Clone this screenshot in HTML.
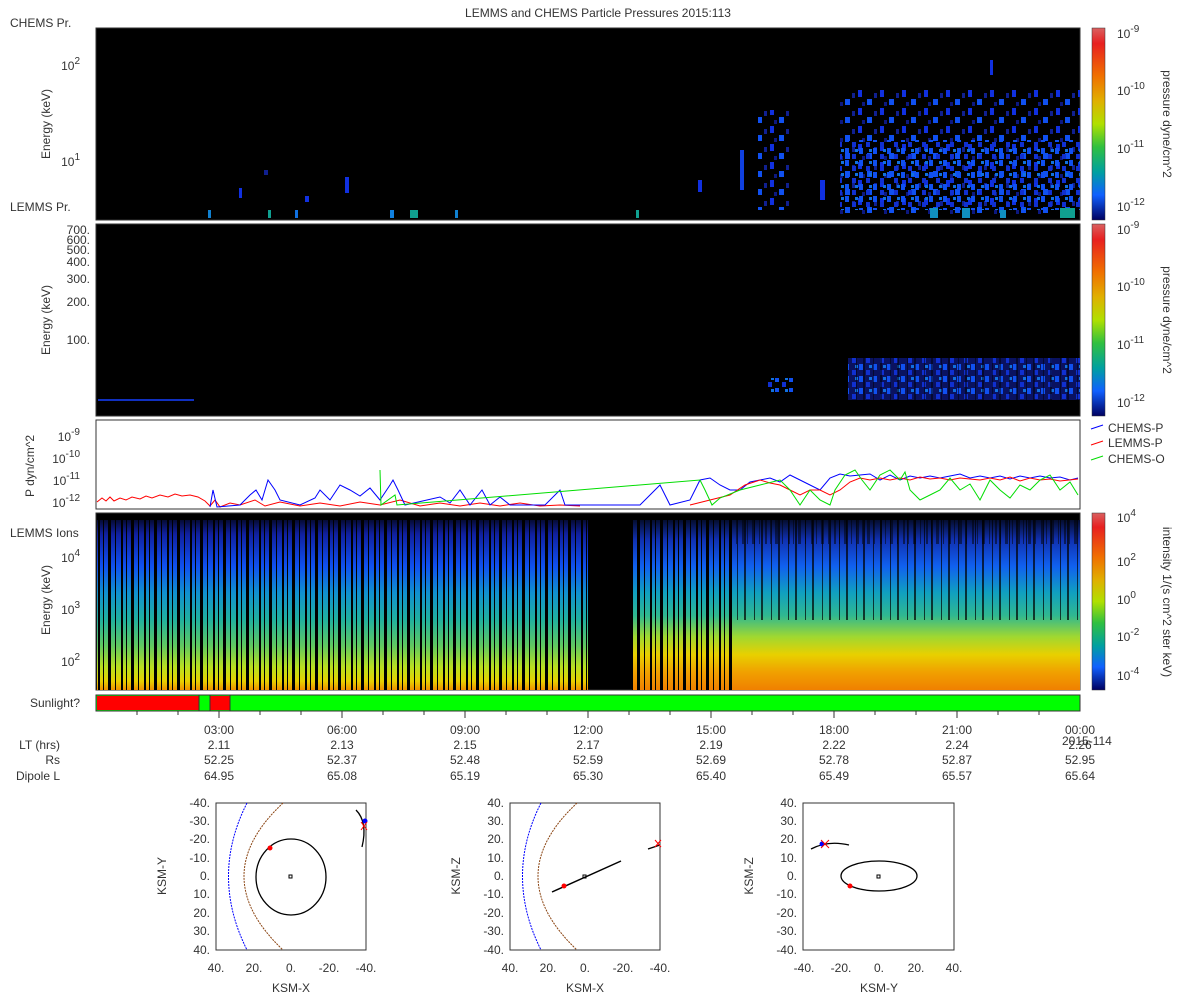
<!DOCTYPE html>
<html><head><meta charset="utf-8"><style>
html,body{margin:0;padding:0;background:#fff;}
svg{display:block;font-family:"Liberation Sans",sans-serif;}
text{fill:#333;font-size:12px;}
</style></head><body>
<svg width="1200" height="1000" viewBox="0 0 1200 1000" xmlns="http://www.w3.org/2000/svg">
<defs>
<linearGradient id="cb" x1="0" y1="0" x2="0" y2="1">
<stop offset="0" stop-color="#d96060"/><stop offset="0.08" stop-color="#e82020"/><stop offset="0.25" stop-color="#f07000"/><stop offset="0.38" stop-color="#e0b000"/><stop offset="0.5" stop-color="#b0e000"/><stop offset="0.62" stop-color="#30c040"/><stop offset="0.75" stop-color="#00a0a0"/><stop offset="0.87" stop-color="#1060ff"/><stop offset="1" stop-color="#000060"/>
</linearGradient>
<linearGradient id="ions" x1="0" y1="513" x2="0" y2="690" gradientUnits="userSpaceOnUse">
<stop offset="0" stop-color="#000"/><stop offset="0.12" stop-color="#1020a0"/><stop offset="0.3" stop-color="#1050f0"/><stop offset="0.45" stop-color="#1090d0"/><stop offset="0.6" stop-color="#20b0a0"/><stop offset="0.75" stop-color="#60c860"/><stop offset="0.87" stop-color="#b8e020"/><stop offset="0.95" stop-color="#e8d000"/><stop offset="1" stop-color="#f09000"/>
</linearGradient>
<linearGradient id="ionsR" x1="0" y1="513" x2="0" y2="690" gradientUnits="userSpaceOnUse">
<stop offset="0" stop-color="#000"/><stop offset="0.15" stop-color="#1030b0"/><stop offset="0.3" stop-color="#1060f0"/><stop offset="0.45" stop-color="#10a0c0"/><stop offset="0.58" stop-color="#30b890"/><stop offset="0.7" stop-color="#a0d830"/><stop offset="0.8" stop-color="#e8d000"/><stop offset="0.9" stop-color="#f0a000"/><stop offset="1" stop-color="#f08000"/>
</linearGradient>
<pattern id="stripes" x="96" y="0" width="23" height="1000" patternUnits="userSpaceOnUse">
<rect x="2" y="0" width="2" height="1000" fill="#000"/><rect x="7" y="0" width="1" height="1000" fill="#000"/><rect x="12" y="0" width="3" height="1000" fill="#000"/><rect x="19" y="0" width="1" height="1000" fill="#000"/>
</pattern>
<pattern id="stripes2" x="3" y="0" width="17" height="1000" patternUnits="userSpaceOnUse">
<rect x="3" y="0" width="1" height="1000" fill="#000"/><rect x="10" y="0" width="2" height="1000" fill="#000"/>
</pattern>
<pattern id="dots" x="0" y="0" width="22" height="18" patternUnits="userSpaceOnUse">
<rect x="0" y="0" width="4" height="7" fill="#1030e0"/><rect x="9" y="9" width="5" height="6" fill="#1050f0"/><rect x="16" y="3" width="3" height="5" fill="#102090"/><rect x="4" y="12" width="3" height="4" fill="#0c1880"/>
</pattern>
<pattern id="dots2" x="5" y="4" width="14" height="12" patternUnits="userSpaceOnUse">
<rect x="0" y="0" width="4" height="6" fill="#1050f0"/><rect x="7" y="6" width="4" height="5" fill="#1030d0"/><rect x="10" y="1" width="3" height="3" fill="#1070e0"/>
</pattern>
</defs>

<text x="598" y="17" text-anchor="middle">LEMMS and CHEMS Particle Pressures  2015:113</text>

<!-- Panel 1 -->
<rect x="96" y="28" width="984" height="192" fill="#000" stroke="#333"/>
<text x="10" y="27">CHEMS Pr.</text>
<text x="10" y="211">LEMMS Pr.</text>
<text x="80" y="70" text-anchor="end">10<tspan dy="-6" font-size="10">2</tspan></text>
<text x="80" y="166" text-anchor="end">10<tspan dy="-6" font-size="10">1</tspan></text>
<text transform="translate(50,124) rotate(-90)" text-anchor="middle">Energy (keV)</text>
<g fill="#1030e0">
<rect x="208" y="210" width="3" height="8" fill="#1080d0"/><rect x="268" y="210" width="3" height="8" fill="#10a090"/><rect x="295" y="210" width="3" height="8" fill="#1070e0"/>
<rect x="239" y="188" width="3" height="10"/><rect x="264" y="170" width="4" height="5" fill="#102090"/><rect x="305" y="196" width="4" height="6"/><rect x="345" y="177" width="4" height="16"/><rect x="390" y="210" width="4" height="8" fill="#1080e0"/><rect x="410" y="210" width="8" height="8" fill="#10a090"/><rect x="455" y="210" width="3" height="8" fill="#1080d0"/><rect x="636" y="210" width="3" height="8" fill="#10a090"/>
<rect x="740" y="150" width="4" height="40" fill="#1040e0"/><rect x="820" y="180" width="5" height="20"/><rect x="698" y="180" width="4" height="12"/><rect x="990" y="60" width="3" height="15"/>
</g>
<rect x="758" y="110" width="34" height="100" fill="url(#dots)"/>
<rect x="840" y="90" width="240" height="125" fill="url(#dots)"/>
<rect x="840" y="140" width="240" height="70" fill="url(#dots2)"/>
<g fill="#1090c0"><rect x="930" y="208" width="8" height="10"/><rect x="962" y="208" width="8" height="10"/><rect x="1060" y="208" width="15" height="10" fill="#10a090"/><rect x="1000" y="210" width="6" height="8"/></g>

<!-- Panel 2 -->
<rect x="96" y="224" width="984" height="192" fill="#000" stroke="#333"/>
<g text-anchor="end" font-size="11">
<text x="90" y="234">700.</text><text x="90" y="244">600.</text><text x="90" y="254">500.</text><text x="90" y="266">400.</text><text x="90" y="283">300.</text><text x="90" y="306">200.</text><text x="90" y="344">100.</text>
</g>
<text transform="translate(50,320) rotate(-90)" text-anchor="middle">Energy (keV)</text>
<rect x="98" y="399" width="96" height="2" fill="#1030c0"/>
<rect x="765" y="378" width="30" height="14" fill="url(#dots2)"/>
<rect x="848" y="358" width="232" height="42" fill="#0a1260"/>
<rect x="848" y="358" width="232" height="42" fill="url(#dots2)"/>
<rect x="848" y="358" width="232" height="42" fill="url(#stripes2)" opacity="0.5"/>

<!-- Panel 3 lines -->
<rect x="96" y="420" width="984" height="89" fill="#fff" stroke="#333"/>
<text transform="translate(34,466) rotate(-90)" text-anchor="middle">P dyn/cm^2</text>
<g text-anchor="end">
<text x="80" y="441">10<tspan dy="-6" font-size="10">-9</tspan></text>
<text x="80" y="463">10<tspan dy="-6" font-size="10">-10</tspan></text>
<text x="80" y="485">10<tspan dy="-6" font-size="10">-11</tspan></text>
<text x="80" y="507">10<tspan dy="-6" font-size="10">-12</tspan></text>
</g>
<polyline fill="none" stroke="#f00" stroke-width="1" points="97,502 102,498 106,501 110,497 114,501 120,498 126,500 132,497 140,499 146,496 152,498 160,495 168,497 175,494 182,496 190,495 198,497 205,501 210,506 215,500 220,507 230,503 240,505 255,500 265,506 280,502 300,506 320,503 340,506 360,502 380,505 400,500 420,506 440,503 460,506 480,503 500,506 520,503 540,506 560,505 580,506"/>
<polyline fill="none" stroke="#00f" stroke-width="1" points="210,507 213,490 217,507 240,505 250,495 256,490 262,500 268,480 275,490 280,500 300,505 315,498 320,490 330,500 340,485 350,490 360,496 370,488 380,500 390,485 393,480 398,490 405,505 440,497 450,503 460,490 470,505 482,490 490,505 500,497 510,505 545,505 560,490 565,505 640,505 650,495 660,485 665,495 670,505 690,500 695,490 700,480 710,478 720,485 730,490 740,490 750,482 760,480 770,478 780,482 790,475 800,480 810,485 820,490 830,478 840,474 850,476 860,475 870,474 880,480 890,475 900,480 910,476 920,478 930,476 940,478 950,476 960,474 970,478 980,476 990,478 1000,476 1010,479 1020,476 1030,478 1040,476 1050,478 1060,477 1070,480 1078,478"/>
<polyline fill="none" stroke="#f00" stroke-width="1" points="690,505 710,500 730,495 745,485 760,480 770,483 780,485 790,490 800,495 810,490 820,490 830,495 840,490 850,482 860,478 870,480 880,478 890,480 900,478 910,480 920,477 930,479 940,478 950,480 960,478 970,479 980,480 990,478 1000,480 1010,477 1020,481 1030,478 1040,480 1050,479 1060,481 1078,479"/>
<polyline fill="none" stroke="#0d0" stroke-width="1" points="380,470 381,505 395,495 397,505 700,480 705,490 712,505 720,498 740,490 760,485 780,480 790,490 800,505 810,490 820,500 830,505 835,490 845,475 855,470 862,480 870,490 880,475 890,470 900,480 905,472 910,490 920,500 930,495 940,490 950,478 960,490 970,484 980,500 990,480 1000,490 1010,498 1020,485 1030,490 1040,480 1050,475 1060,490 1070,482 1078,495"/>

<!-- Panel 4 ions -->
<rect x="96" y="513" width="984" height="177" fill="#000" stroke="#333"/>
<rect x="97" y="520" width="491" height="170" fill="url(#ions)"/>
<rect x="97" y="520" width="491" height="170" fill="url(#stripes)"/>
<rect x="632" y="520" width="448" height="170" fill="url(#ionsR)"/>
<rect x="632" y="520" width="100" height="170" fill="url(#stripes)"/>
<rect x="732" y="520" width="348" height="100" fill="url(#stripes2)" opacity="0.7"/>
<rect x="97" y="514" width="983" height="30" fill="url(#stripes)" opacity="0.5"/>
<text x="10" y="537">LEMMS Ions</text>
<g text-anchor="end">
<text x="80" y="562">10<tspan dy="-6" font-size="10">4</tspan></text>
<text x="80" y="614">10<tspan dy="-6" font-size="10">3</tspan></text>
<text x="80" y="666">10<tspan dy="-6" font-size="10">2</tspan></text>
</g>
<text transform="translate(50,600) rotate(-90)" text-anchor="middle">Energy (keV)</text>

<!-- colorbars -->
<rect x="1092" y="28" width="13" height="192" fill="url(#cb)" stroke="#333" stroke-width="0.5"/>
<rect x="1092" y="224" width="13" height="192" fill="url(#cb)" stroke="#333" stroke-width="0.5"/>
<rect x="1092" y="513" width="13" height="177" fill="url(#cb)" stroke="#333" stroke-width="0.5"/>
<g>
<text x="1117" y="38">10<tspan dy="-6" font-size="10">-9</tspan></text>
<text x="1117" y="95">10<tspan dy="-6" font-size="10">-10</tspan></text>
<text x="1117" y="153">10<tspan dy="-6" font-size="10">-11</tspan></text>
<text x="1117" y="211">10<tspan dy="-6" font-size="10">-12</tspan></text>
<text x="1117" y="234">10<tspan dy="-6" font-size="10">-9</tspan></text>
<text x="1117" y="291">10<tspan dy="-6" font-size="10">-10</tspan></text>
<text x="1117" y="349">10<tspan dy="-6" font-size="10">-11</tspan></text>
<text x="1117" y="407">10<tspan dy="-6" font-size="10">-12</tspan></text>
<text x="1117" y="522">10<tspan dy="-6" font-size="10">4</tspan></text>
<text x="1117" y="566">10<tspan dy="-6" font-size="10">2</tspan></text>
<text x="1117" y="604">10<tspan dy="-6" font-size="10">0</tspan></text>
<text x="1117" y="641">10<tspan dy="-6" font-size="10">-2</tspan></text>
<text x="1117" y="680">10<tspan dy="-6" font-size="10">-4</tspan></text>
</g>
<text transform="translate(1163,124) rotate(90)" text-anchor="middle">pressure dyne/cm^2</text>
<text transform="translate(1163,320) rotate(90)" text-anchor="middle">pressure dyne/cm^2</text>
<text transform="translate(1163,602) rotate(90)" text-anchor="middle">intensity 1/(s cm^2 ster keV)</text>
<line x1="1091" y1="429" x2="1103" y2="425" stroke="#00f"/><text x="1108" y="432">CHEMS-P</text>
<line x1="1091" y1="445" x2="1103" y2="441" stroke="#f00"/><text x="1108" y="447">LEMMS-P</text>
<line x1="1091" y1="460" x2="1103" y2="456" stroke="#0d0"/><text x="1108" y="463">CHEMS-O</text>

<!-- Sunlight -->
<text x="80" y="707" text-anchor="end">Sunlight?</text>
<rect x="96" y="695" width="984" height="16" fill="#0f0" stroke="#333"/>
<rect x="97" y="696" width="102" height="14" fill="#f00"/>
<rect x="210" y="696" width="20" height="14" fill="#f00"/>
<line x1="210" y1="695" x2="210" y2="711" stroke="#333"/><line x1="230" y1="695" x2="230" y2="711" stroke="#333"/><line x1="199" y1="695" x2="199" y2="711" stroke="#333"/>
<g stroke="#333">
<line x1="137" y1="711" x2="137" y2="715"/><line x1="178" y1="711" x2="178" y2="715"/><line x1="219" y1="711" x2="219" y2="718"/>
<line x1="260" y1="711" x2="260" y2="715"/><line x1="301" y1="711" x2="301" y2="715"/><line x1="342" y1="711" x2="342" y2="718"/>
<line x1="383" y1="711" x2="383" y2="715"/><line x1="424" y1="711" x2="424" y2="715"/><line x1="465" y1="711" x2="465" y2="718"/>
<line x1="506" y1="711" x2="506" y2="715"/><line x1="547" y1="711" x2="547" y2="715"/><line x1="588" y1="711" x2="588" y2="718"/>
<line x1="629" y1="711" x2="629" y2="715"/><line x1="670" y1="711" x2="670" y2="715"/><line x1="711" y1="711" x2="711" y2="718"/>
<line x1="752" y1="711" x2="752" y2="715"/><line x1="793" y1="711" x2="793" y2="715"/><line x1="834" y1="711" x2="834" y2="718"/>
<line x1="875" y1="711" x2="875" y2="715"/><line x1="916" y1="711" x2="916" y2="715"/><line x1="957" y1="711" x2="957" y2="718"/>
<line x1="998" y1="711" x2="998" y2="715"/><line x1="1039" y1="711" x2="1039" y2="715"/>
</g>
<g text-anchor="middle">
<text x="219" y="734">03:00</text><text x="342" y="734">06:00</text><text x="465" y="734">09:00</text><text x="588" y="734">12:00</text><text x="711" y="734">15:00</text><text x="834" y="734">18:00</text><text x="957" y="734">21:00</text><text x="1080" y="734">00:00</text>
<text x="219" y="749">2.11</text><text x="342" y="749">2.13</text><text x="465" y="749">2.15</text><text x="588" y="749">2.17</text><text x="711" y="749">2.19</text><text x="834" y="749">2.22</text><text x="957" y="749">2.24</text><text x="1080" y="749">2.26</text>
<text x="219" y="764">52.25</text><text x="342" y="764">52.37</text><text x="465" y="764">52.48</text><text x="588" y="764">52.59</text><text x="711" y="764">52.69</text><text x="834" y="764">52.78</text><text x="957" y="764">52.87</text><text x="1080" y="764">52.95</text>
<text x="219" y="780">64.95</text><text x="342" y="780">65.08</text><text x="465" y="780">65.19</text><text x="588" y="780">65.30</text><text x="711" y="780">65.40</text><text x="834" y="780">65.49</text><text x="957" y="780">65.57</text><text x="1080" y="780">65.64</text>
</g>
<text x="1062" y="745">2015-114</text>
<g text-anchor="end">
<text x="60" y="749">LT (hrs)</text><text x="60" y="764">Rs</text><text x="60" y="780">Dipole L</text>
</g>

<!-- Orbit plot 1 -->
<rect x="216" y="803" width="150" height="147" fill="none" stroke="#333"/>
<g text-anchor="end" font-size="11">
<text x="210" y="807">-40.</text><text x="210" y="825">-30.</text><text x="210" y="843">-20.</text><text x="210" y="862">-10.</text><text x="210" y="880">0.</text><text x="210" y="898">10.</text><text x="210" y="917">20.</text><text x="210" y="935">30.</text><text x="210" y="954">40.</text>
</g>
<g text-anchor="middle" font-size="11"><text x="216" y="972">40.</text><text x="254" y="972">20.</text><text x="291" y="972">0.</text><text x="329" y="972">-20.</text><text x="366" y="972">-40.</text></g>
<text x="291" y="992" text-anchor="middle">KSM-X</text>
<text transform="translate(166,876) rotate(-90)" text-anchor="middle">KSM-Y</text>
<path d="M247,803 Q210,876 247,950" fill="none" stroke="#00f" stroke-dasharray="2,1"/>
<path d="M283,803 Q205,876 283,950" fill="none" stroke="#8b4513" stroke-dasharray="2,1"/>
<ellipse cx="291" cy="877" rx="35" ry="38" fill="none" stroke="#000" stroke-width="1.3"/>
<rect x="289" y="875" width="3" height="3" fill="none" stroke="#000"/>
<circle cx="270" cy="848" r="2.5" fill="#f00"/>
<path d="M356,810 Q368,822 362,847" fill="none" stroke="#000" stroke-width="1.3"/>
<circle cx="365" cy="821" r="2.5" fill="#00f"/>
<path d="M361,822 L367,830 M361,830 L367,822" stroke="#f00"/>

<!-- Orbit plot 2 -->
<rect x="510" y="803" width="150" height="147" fill="none" stroke="#333"/>
<g text-anchor="end" font-size="11">
<text x="504" y="807">40.</text><text x="504" y="825">30.</text><text x="504" y="843">20.</text><text x="504" y="862">10.</text><text x="504" y="880">0.</text><text x="504" y="898">-10.</text><text x="504" y="917">-20.</text><text x="504" y="935">-30.</text><text x="504" y="954">-40.</text>
</g>
<g text-anchor="middle" font-size="11"><text x="510" y="972">40.</text><text x="548" y="972">20.</text><text x="585" y="972">0.</text><text x="623" y="972">-20.</text><text x="660" y="972">-40.</text></g>
<text x="585" y="992" text-anchor="middle">KSM-X</text>
<text transform="translate(460,876) rotate(-90)" text-anchor="middle">KSM-Z</text>
<path d="M541,803 Q504,876 541,950" fill="none" stroke="#00f" stroke-dasharray="2,1"/>
<path d="M577,803 Q499,876 577,950" fill="none" stroke="#8b4513" stroke-dasharray="2,1"/>
<line x1="552" y1="892" x2="621" y2="861" stroke="#000" stroke-width="1.5"/>
<rect x="583" y="875" width="3" height="3" fill="none" stroke="#000"/>
<circle cx="564" cy="886" r="2.5" fill="#f00"/>
<line x1="648" y1="849" x2="660" y2="845" stroke="#000" stroke-width="1.3"/>
<path d="M655,840 L661,847 M655,847 L661,840" stroke="#f00"/>

<!-- Orbit plot 3 -->
<rect x="803" y="803" width="151" height="147" fill="none" stroke="#333"/>
<g text-anchor="end" font-size="11">
<text x="797" y="807">40.</text><text x="797" y="825">30.</text><text x="797" y="843">20.</text><text x="797" y="862">10.</text><text x="797" y="880">0.</text><text x="797" y="898">-10.</text><text x="797" y="917">-20.</text><text x="797" y="935">-30.</text><text x="797" y="954">-40.</text>
</g>
<g text-anchor="middle" font-size="11"><text x="804" y="972">-40.</text><text x="841" y="972">-20.</text><text x="879" y="972">0.</text><text x="916" y="972">20.</text><text x="954" y="972">40.</text></g>
<text x="879" y="992" text-anchor="middle">KSM-Y</text>
<text transform="translate(753,876) rotate(-90)" text-anchor="middle">KSM-Z</text>
<ellipse cx="879" cy="876" rx="38" ry="15" fill="none" stroke="#000" stroke-width="1.3"/>
<rect x="877" y="875" width="3" height="3" fill="none" stroke="#000"/>
<circle cx="850" cy="886" r="2.5" fill="#f00"/>
<path d="M811,849 Q828,840 849,845" fill="none" stroke="#000" stroke-width="1.3"/>
<circle cx="822" cy="844" r="2.5" fill="#00f"/>
<path d="M821,840 L829,848 M821,848 L829,840" stroke="#f00"/>
</svg>
</body></html>
